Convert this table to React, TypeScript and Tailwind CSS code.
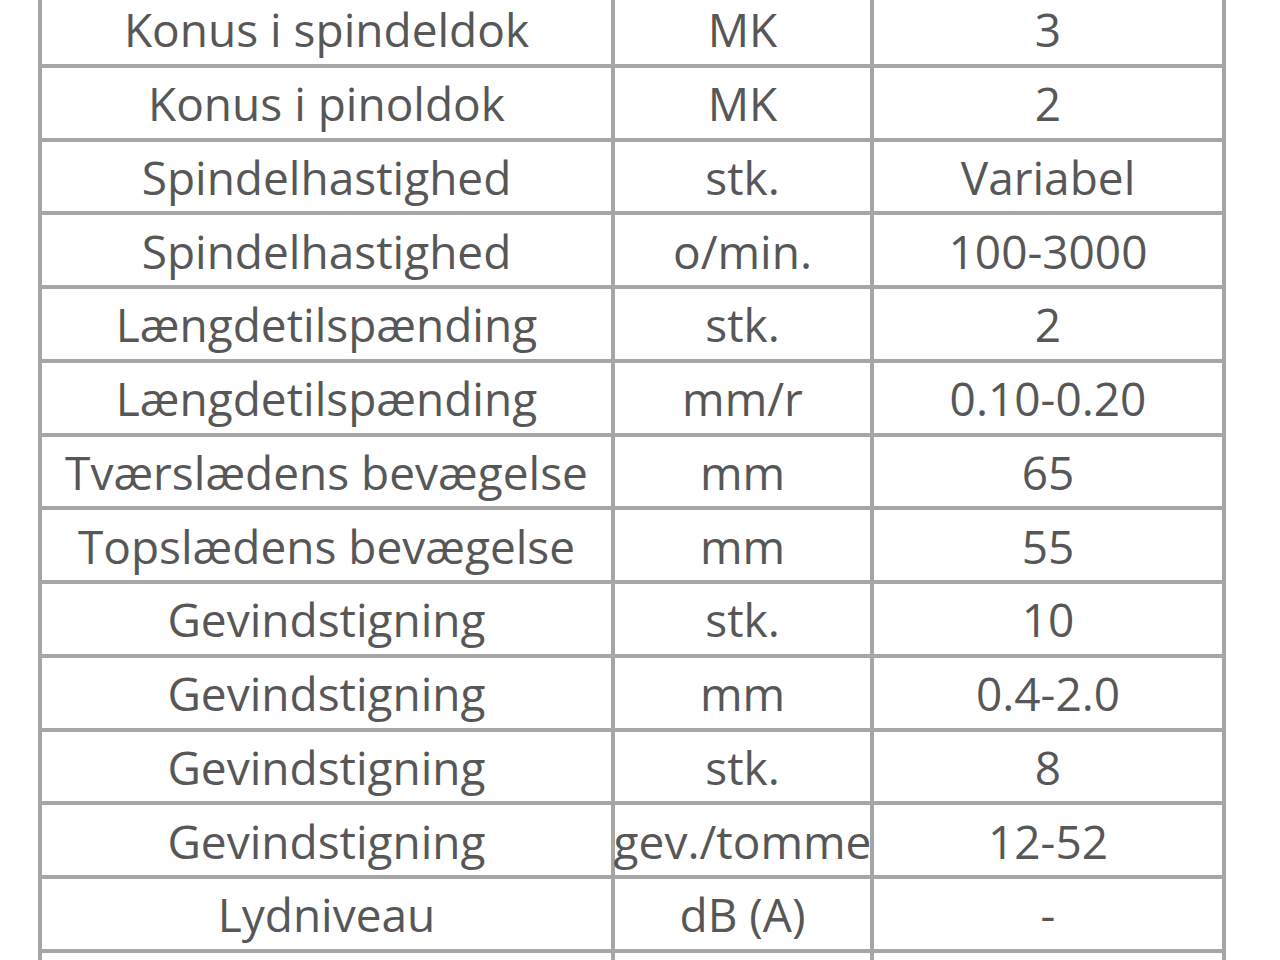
import React from "react";

const rows: [string, string, string][] = [
  ["Konus i spindeldok", "MK", "3"],
  ["Konus i pinoldok", "MK", "2"],
  ["Spindelhastighed", "stk.", "Variabel"],
  ["Spindelhastighed", "o/min.", "100-3000"],
  ["Længdetilspænding", "stk.", "2"],
  ["Længdetilspænding", "mm/r", "0.10-0.20"],
  ["Tværslædens bevægelse", "mm", "65"],
  ["Topslædens bevægelse", "mm", "55"],
  ["Gevindstigning", "stk.", "10"],
  ["Gevindstigning", "mm", "0.4-2.0"],
  ["Gevindstigning", "stk.", "8"],
  ["Gevindstigning", "gev./tomme", "12-52"],
  ["Lydniveau", "dB (A)", "-"],
  ["", "", ""],
];

export default function App() {
  return (
    <div className="w-[1280px] h-[960px] overflow-hidden bg-white">
      <div
        className="ml-[38px] mt-[-10px] w-[1188px] border-x-4 border-t-4 border-[#a6a6a6] text-[#575757]"
        style={{ fontFamily: '"Open Sans", "Noto Sans", sans-serif' }}
      >
        {rows.map((r, i) => (
          <div
            key={i}
            className="grid grid-cols-[573px_259px_348px] h-[73.75px] border-b-4 border-[#a6a6a6]"
          >
            <div className="flex items-center justify-center pt-[1px] border-r-4 border-[#a6a6a6] text-[46px] leading-none whitespace-nowrap">
              {r[0]}
            </div>
            <div className="flex items-center justify-center pt-[1px] border-r-4 border-[#a6a6a6] text-[46px] leading-none whitespace-nowrap">
              {r[1]}
            </div>
            <div className="flex items-center justify-center pt-[1px] text-[46px] leading-none whitespace-nowrap">
              {r[2]}
            </div>
          </div>
        ))}
      </div>
    </div>
  );
}
